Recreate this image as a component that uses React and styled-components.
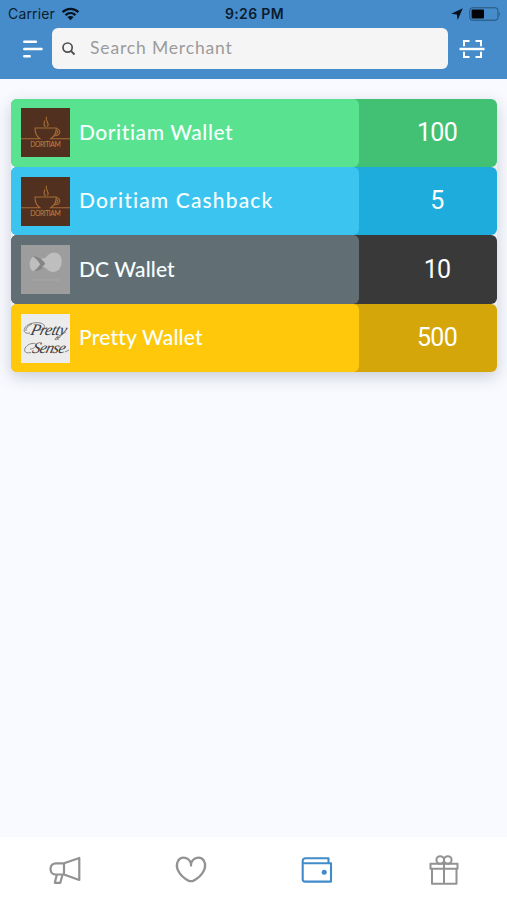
import React from "react";
import styled, { createGlobalStyle } from "styled-components";

const GlobalStyle = createGlobalStyle`
  *, *::before, *::after { box-sizing: border-box; }
  body { margin: 0; background: #f8faff; }
  svg { display: block; flex: none; }
`;

const Screen = styled.div`
  display: flex;
  flex-direction: column;
  width: 507px;
  height: 900px;
  overflow: hidden;
  background: #f8faff;
  font-family: Lato, "Open Sans", sans-serif;
`;

const Header = styled.header`
  height: 79px;
  flex: none;
  background: #468ccb;
`;

const StatusBar = styled.div`
  display: grid;
  grid-template-columns: 1fr auto 1fr;
  align-items: center;
  height: 27.5px;
  padding: 0 6px 0 8px;
  color: #0a1c2e;
  font-family: Inter, "Liberation Sans", sans-serif;
  font-size: 14px;
  line-height: 27px;
`;

const StatusGroup = styled.div`
  display: flex;
  align-items: center;
  gap: 6px;
  justify-content: ${(p) => (p.$end ? "flex-end" : "flex-start")};
`;

const Carrier = styled.span`
  font-size: 14px;
  letter-spacing: 0.15px;
`;

const Clock = styled.span`
  position: relative;
  font-size: 14px;
  font-weight: 600;
  letter-spacing: 0.35px;
`;

const Toolbar = styled.div`
  display: flex;
  align-items: center;
  height: 41.5px;
`;

const IconButton = styled.button`
  display: flex;
  align-items: center;
  justify-content: center;
  padding: 2px 0 0 ${(p) => p.$left || 0}px;
  border: 0;
  background: none;
  color: #fff;
  height: 42px;
  width: ${(p) => p.$width}px;
`;

const SearchBox = styled.label`
  display: flex;
  align-items: center;
  width: 396px;
  height: 41.5px;
  padding-left: 9px;
  gap: 14px;
  border-radius: 6px;
  background: #f5f5f5;
`;

const SearchText = styled.span`
  color: #9b9b9b;
  font-size: 17.5px;
  letter-spacing: 0.85px;
  line-height: 40px;
  padding-bottom: 1px;
`;

const Main = styled.main`
  flex: 1;
  padding: 19.6px 10px 0 11px;
`;

const WalletList = styled.section`
  border-radius: 6px;
  background: #edf1f6;
  box-shadow: 0 5px 16px rgba(40, 48, 70, 0.22);
`;

const WalletRow = styled.article`
  display: flex;
  height: 68.45px;
  border-radius: 6px;
  overflow: hidden;
  background: ${(p) => p.$shade};
`;

const WalletInfo = styled.div`
  display: flex;
  align-items: center;
  width: 348px;
  padding-left: 9.5px;
  gap: 9.5px;
  border-radius: 0 6px 6px 0;
  background: ${(p) => p.$color};
`;

const WalletName = styled.h2`
  margin: 0;
  padding-bottom: 2px;
  color: #f7ffff;
  font-size: 21px;
  font-weight: 500;
  line-height: 28px;
  letter-spacing: ${(p) => p.$spacing}px;
  white-space: nowrap;
`;

const Balance = styled.div`
  display: flex;
  align-items: center;
  justify-content: center;
  width: 138px;
  padding-left: 18px;
  padding-bottom: 1px;
  color: #fff;
  font-family: Roboto, sans-serif;
  font-size: 25px;
  letter-spacing: -0.7px;
`;

const TabBar = styled.nav`
  display: grid;
  grid-template-columns: repeat(4, 1fr);
  flex: none;
  height: 63px;
  background: #fff;
`;

const Tab = styled.button`
  display: flex;
  justify-content: center;
  padding: 17px 0 0 ${(p) => p.$nudge || 0}px;
  border: 0;
  background: none;
  color: ${(p) => (p.$active ? "#428bca" : "#929292")};
`;

const Wifi = () => (
  <svg width="19" height="14" viewBox="0 0 19 14" fill="none" stroke="#07131f" strokeWidth="2.4">
    <path d="M1.6 5.2C6.2.8 12.8.8 17.4 5.2M4.5 8.1C7.5 5.4 11.5 5.4 14.5 8.1" />
    <path d="M6.4 10.1c1.9-1.6 4.3-1.6 6.2 0L9.5 13.2z" fill="#07131f" stroke="none" />
  </svg>
);

const LocationArrow = () => (
  <svg width="12" height="12" viewBox="0 0 12 12">
    <path d="M11.8.2 6.7 11.9 5.8 6.5.2 5.7z" fill="#07131f" />
  </svg>
);

const Battery = () => (
  <svg width="32" height="14" viewBox="0 0 32 14">
    <rect x=".8" y=".8" width="28.2" height="12.4" rx="2.6" fill="none" stroke="#275275" />
    <rect x="2.6" y="2.6" width="12.4" height="8.8" rx="1" fill="#020407" />
    <path d="M30.2 4.8q1.6 2.2 0 4.4z" fill="#275275" />
  </svg>
);

const MenuIcon = () => (
  <svg width="20" height="18" viewBox="0 0 20 18" stroke="#fff" strokeWidth="2.5" strokeLinecap="round">
    <path d="M1.3 1.8h11.6M1.3 9h17.2M1.3 16.2h5.4" />
  </svg>
);

const SearchIcon = () => (
  <svg width="15" height="15" viewBox="0 0 15 15" fill="none" stroke="#505050" strokeWidth="1.7">
    <circle cx="6.6" cy="6.6" r="4.6" />
    <path d="m9.9 9.9 3.6 3.6" strokeWidth="2" />
  </svg>
);

const ScanIcon = () => (
  <svg width="26" height="20" viewBox="0 0 26 20" fill="none" stroke="#fff" strokeWidth="2">
    <path d="M5 7.2V2h5.5M16.5 2H22v5.2M5 12.8V18h5.5M16.5 18H22v-5.2" />
    <path d="M.5 10h25" strokeWidth="2.4" />
  </svg>
);

const CoffeeLogo = () => (
  <svg width="49" height="49" viewBox="0 0 49 49">
    <rect width="49" height="49" fill="#51301f" />
    <g fill="none" stroke="#a66c36" strokeWidth="1.1">
      <path d="M0 30.8h18.800C15.600 28.500 14 25.500 14 20h21.300c0 5.300-2 8.500-5.500 10.800H49" />
      <path d="M35.300 20.500c5.500 1 4.300 7.300-2.300 7.300M35.300 22.600c2.700.7 1.600 3.600-1.300 3.600" />
      <path d="M24.600 19c-3.700-3 .2-4.300-1.400-6.500M26.300 18.500c3.400-3.800-3.100-4.600-.7-9.800" />
    </g>
    <text x="9.300" y="39" textLength="30.500" fill="#c18045" fontFamily="Lato, sans-serif" fontSize="6.800">
      DORITIAM
    </text>
  </svg>
);

const DcLogo = () => (
  <svg width="49" height="49" viewBox="0 0 49 49">
    <rect width="49" height="49" fill="#9d9d9d" />
    <path d="M11.500 12q3.500.5 8 7.500-3.500 6-7.500 6.700-3-1.500-3.300-6.200t2.800-8z" fill="#bebebe" />
    <path d="M12.500 11.500q6-1 11.500 7-2 7.500-11 7.500 4-3 6.300-6.700-2.800-5-6.800-7.800z" fill="#858585" />
    <path d="M20 13.500q4.500.5 7-3.500c3-3.500 9-3.500 12 .3 2.800 4.400 2 11.200-1.500 14.700-4 3.200-9.500 2-12-1.300q-2-2.500-5-1.500 4-2.500 3.600-4.300z" fill="#bebebe" />
    <path d="M10.500 35h28" stroke="#aaa" strokeWidth="1" strokeDasharray="2 .6" />
  </svg>
);

const PrettyLogo = () => (
  <svg width="49" height="49" viewBox="0 0 49 49">
    <rect width="49" height="49" fill="#ececec" />
    <g fill="#3c3c3c" fontFamily="Liberation Serif, serif" fontStyle="italic" fontSize="16">
      <text x="9" y="21" textLength="36" transform="translate(5.300 0) skewX(-15)">Pretty</text>
      <text x="11" y="39" textLength="33" transform="translate(10 0) skewX(-15)">Sense</text>
    </g>
    <g fill="none" stroke="#555" strokeWidth=".65">
      <path d="M9 19C0 21 2 11 11 9.300C24 6 29 16 16 16.200M5 17q-1-4 6-7" />
      <path d="M10 38.500C0 41 3 30.500 11 29.500C18 28.500 15 35 9 35M44 38l4-2" />
      <path d="M38 25q-7 2-2-2l9-5" />
    </g>
  </svg>
);

const MegaphoneIcon = () => (
  <svg width="34" height="32" viewBox="0 0 34 32" fill="none" stroke="currentColor" strokeWidth="2.200" strokeLinejoin="round">
    <path d="M16 9.300 31.300 4v22L16 20.500zM16 9.300H8c-3.300 0-5.500 2.300-5.500 5.600S4.700 20.500 8 20.500h8" />
    <path d="M8.800 20.700 6.800 28.800h5.500l2.200-8.100" />
  </svg>
);

const HeartIcon = () => (
  <svg width="34" height="32" viewBox="0 0 34 32" fill="none" stroke="currentColor" strokeWidth="2.300" strokeLinejoin="round" strokeLinecap="round">
    <path d="M17 11.500V9.700C14.900 2.600 7.400 2.200 4.300 6.500c-3.800 6.200.6 15.300 10.100 20.100 1.900.9 3.300.9 5.200 0C29.100 21.800 33.500 12.700 29.700 6.500 26.600 2.200 19.100 2.600 17 9.700" />
  </svg>
);

const WalletIcon = () => (
  <svg width="34" height="32" viewBox="0 0 34 32" fill="none" stroke="currentColor" strokeWidth="2.100" strokeLinejoin="round">
    <path d="M28.500 8.800V4.200H5.500C3.700 4.200 2.700 5.200 2.700 7v18.300c0 1.500.8 2.300 2.300 2.300h26V9.300H2.700" />
    <circle cx="24.200" cy="18.200" r="2.500" fill="currentColor" stroke="none" />
  </svg>
);

const GiftIcon = () => (
  <svg width="34" height="32" viewBox="0 0 34 32" fill="none" stroke="currentColor" strokeWidth="2" strokeLinejoin="round">
    <path d="M3.500 9.700h27v5h-27zM5 14.700v15h24.500v-15M17 6v23.700" />
    <circle cx="13.200" cy="6" r="3.800" />
    <circle cx="20.800" cy="6" r="3.800" />
  </svg>
);

const wallets = [
  { name: "Doritiam Wallet", balance: 100, color: "#59e390", shade: "#42c174", Logo: CoffeeLogo, spacing: 0.55 },
  { name: "Doritiam Cashback", balance: 5, color: "#3bc4ef", shade: "#1eacdc", Logo: CoffeeLogo, spacing: 1.15 },
  { name: "DC Wallet", balance: 10, color: "#616f75", shade: "#393939", Logo: DcLogo, spacing: 0.1 },
  { name: "Pretty Wallet", balance: 500, color: "#ffc80a", shade: "#d4a60a", Logo: PrettyLogo, spacing: 0.2 },
];

const tabs = [
  { label: "Promotions", Icon: MegaphoneIcon, nudge: 3 },
  { label: "Favorites", Icon: HeartIcon, nudge: 2 },
  { label: "Wallets", Icon: WalletIcon, active: true },
  { label: "Rewards", Icon: GiftIcon },
];

export default function App() {
  return (
    <Screen>
      <GlobalStyle />
      <Header>
        <StatusBar>
          <StatusGroup><Carrier>Carrier</Carrier><Wifi /></StatusGroup>
          <Clock>9:26 PM</Clock>
          <StatusGroup $end><LocationArrow /><Battery /></StatusGroup>
        </StatusBar>
        <Toolbar>
          <IconButton $width={52} $left={13} aria-label="Menu"><MenuIcon /></IconButton>
          <SearchBox><SearchIcon /><SearchText>Search Merchant</SearchText></SearchBox>
          <IconButton $width={47} aria-label="Scan"><ScanIcon /></IconButton>
        </Toolbar>
      </Header>
      <Main>
        <WalletList>
          {wallets.map(({ name, balance, color, shade, Logo, spacing }) => (
            <WalletRow key={name} $shade={shade}>
              <WalletInfo $color={color}>
                <Logo />
                <WalletName $spacing={spacing}>{name}</WalletName>
              </WalletInfo>
              <Balance>{balance}</Balance>
            </WalletRow>
          ))}
        </WalletList>
      </Main>
      <TabBar>
        {tabs.map(({ label, Icon, active, nudge }) => (
          <Tab key={label} $active={active} $nudge={nudge} aria-label={label}><Icon /></Tab>
        ))}
      </TabBar>
    </Screen>
  );
}
